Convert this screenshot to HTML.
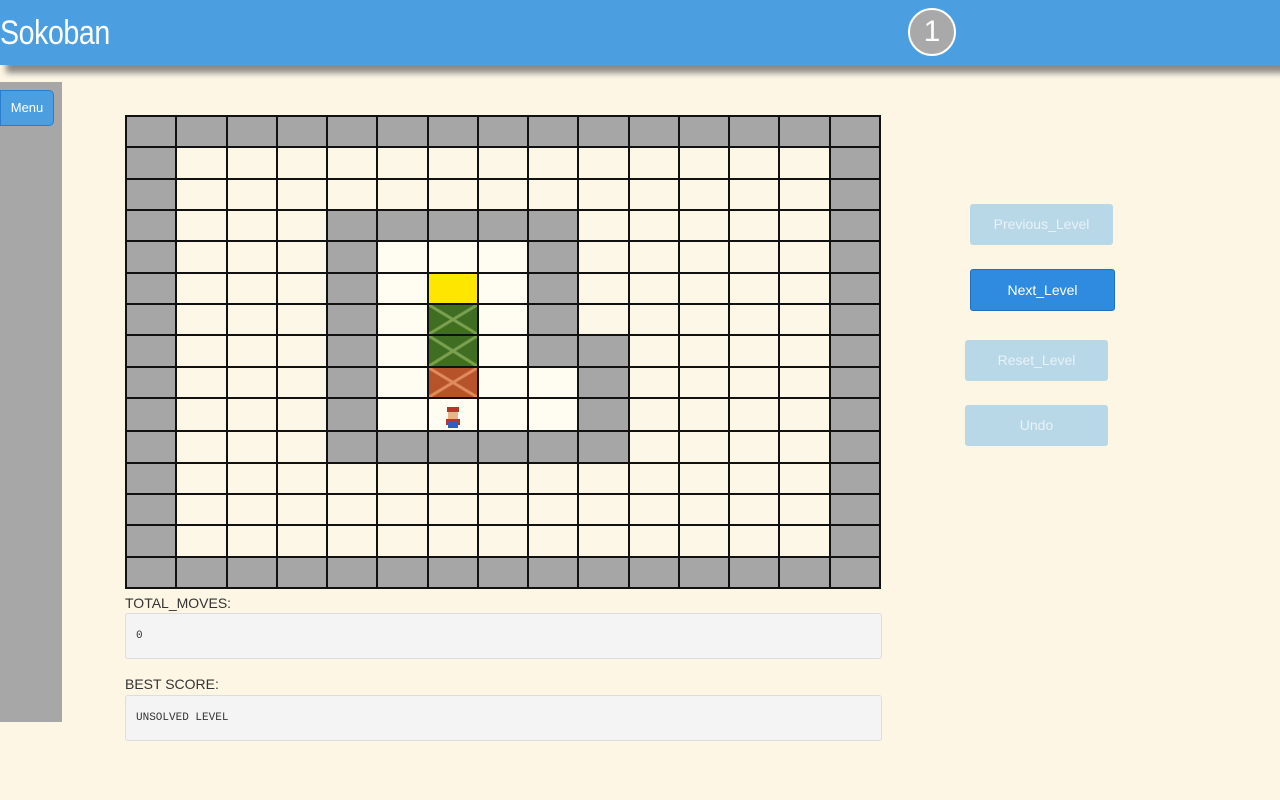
<!DOCTYPE html>
<html><head><style>
body{margin:0;width:1280px;height:800px;background:#fdf6e5;font-family:"Liberation Sans",sans-serif;position:relative;overflow:hidden}
.hdr{position:absolute;left:0;top:0;width:1280px;height:65px;background:#4b9fe1;box-shadow:6px 8px 6px #8a8a8a}
.hdr h1{margin:0;position:absolute;left:0;top:14px;font-weight:normal;color:#fff;font-size:34px;letter-spacing:-0.5px;transform:scaleX(0.84);transform-origin:0 0}
.num{position:absolute;left:908px;top:8px;width:44px;height:44px;border-radius:50%;background:#a9a9a9;border:2px solid #fff;color:#fff;font-size:30px;text-align:center;line-height:44px}
.side{position:absolute;left:0;top:82px;width:62px;height:640px;background:#a7a7a7}
.menu{position:absolute;left:0;top:90px;width:52px;height:34px;background:#4b9fe1;border:1px solid #2a7ccc;border-radius:0 5px 5px 0;color:#fff;font-size:13px;text-align:center;line-height:34px}
table{position:absolute;left:125px;top:115px;border-collapse:collapse;width:756px;height:474px;table-layout:fixed}
td{border:2px solid #111;padding:0;height:29px;background:#fdf7e7;font-size:0;line-height:0;overflow:hidden}
td.w{background:#a6a6a6}td.i{background:#fffdf2}td.y{background:#ffe600}
td.g{background:linear-gradient(to top right,transparent 46%,#7aa050 48%,#7aa050 52%,transparent 54%),linear-gradient(to bottom right,transparent 46%,#7aa050 48%,#7aa050 52%,transparent 54%),#3f6e22}
td.o{background:linear-gradient(to top right,transparent 46%,#e08a60 48%,#e08a60 52%,transparent 54%),linear-gradient(to bottom right,transparent 46%,#e08a60 48%,#e08a60 52%,transparent 54%),#b6532a}
.btn{position:absolute;width:143px;height:41px;border-radius:3px;color:#fff;font-size:14px;text-align:center;line-height:41px}
.l{background:#b9d8e7;color:#e8f2f7}
.lab{position:absolute;left:125px;font-size:14px;color:#333}
.inp{position:absolute;left:125px;width:755px;height:44px;background:#f4f4f4;border:1px solid #ddd;border-radius:3px;font-family:"Liberation Mono",monospace;font-size:11px;line-height:44px;text-indent:10px;color:#333}
</style></head><body>
<div class="hdr"><h1>Sokoban</h1><div class="num">1</div></div>
<div class="side"></div>
<div class="menu">Menu</div>
<table>
<tr><td class="w"></td><td class="w"></td><td class="w"></td><td class="w"></td><td class="w"></td><td class="w"></td><td class="w"></td><td class="w"></td><td class="w"></td><td class="w"></td><td class="w"></td><td class="w"></td><td class="w"></td><td class="w"></td><td class="w"></td></tr>
<tr><td class="w"></td><td></td><td></td><td></td><td></td><td></td><td></td><td></td><td></td><td></td><td></td><td></td><td></td><td></td><td class="w"></td></tr>
<tr><td class="w"></td><td></td><td></td><td></td><td></td><td></td><td></td><td></td><td></td><td></td><td></td><td></td><td></td><td></td><td class="w"></td></tr>
<tr><td class="w"></td><td></td><td></td><td></td><td class="w"></td><td class="w"></td><td class="w"></td><td class="w"></td><td class="w"></td><td></td><td></td><td></td><td></td><td></td><td class="w"></td></tr>
<tr><td class="w"></td><td></td><td></td><td></td><td class="w"></td><td class="i"></td><td class="i"></td><td class="i"></td><td class="w"></td><td></td><td></td><td></td><td></td><td></td><td class="w"></td></tr>
<tr><td class="w"></td><td></td><td></td><td></td><td class="w"></td><td class="i"></td><td class="y"></td><td class="i"></td><td class="w"></td><td></td><td></td><td></td><td></td><td></td><td class="w"></td></tr>
<tr><td class="w"></td><td></td><td></td><td></td><td class="w"></td><td class="i"></td><td class="g"></td><td class="i"></td><td class="w"></td><td></td><td></td><td></td><td></td><td></td><td class="w"></td></tr>
<tr><td class="w"></td><td></td><td></td><td></td><td class="w"></td><td class="i"></td><td class="g"></td><td class="i"></td><td class="w"></td><td class="w"></td><td></td><td></td><td></td><td></td><td class="w"></td></tr>
<tr><td class="w"></td><td></td><td></td><td></td><td class="w"></td><td class="i"></td><td class="o"></td><td class="i"></td><td class="i"></td><td class="w"></td><td></td><td></td><td></td><td></td><td class="w"></td></tr>
<tr><td class="w"></td><td></td><td></td><td></td><td class="w"></td><td class="i"></td><td class="i"><svg width="22" height="24" viewBox="0 0 22 24" style="display:block;margin:7px auto 0"><rect x="5" y="1" width="12" height="5" fill="#b8352a"/><rect x="6" y="6" width="10" height="7" fill="#e9b48a"/><rect x="4" y="13" width="14" height="6" fill="#b8352a"/><rect x="6" y="15" width="10" height="7" fill="#2f5fc4"/></svg></td><td class="i"></td><td class="i"></td><td class="w"></td><td></td><td></td><td></td><td></td><td class="w"></td></tr>
<tr><td class="w"></td><td></td><td></td><td></td><td class="w"></td><td class="w"></td><td class="w"></td><td class="w"></td><td class="w"></td><td class="w"></td><td></td><td></td><td></td><td></td><td class="w"></td></tr>
<tr><td class="w"></td><td></td><td></td><td></td><td></td><td></td><td></td><td></td><td></td><td></td><td></td><td></td><td></td><td></td><td class="w"></td></tr>
<tr><td class="w"></td><td></td><td></td><td></td><td></td><td></td><td></td><td></td><td></td><td></td><td></td><td></td><td></td><td></td><td class="w"></td></tr>
<tr><td class="w"></td><td></td><td></td><td></td><td></td><td></td><td></td><td></td><td></td><td></td><td></td><td></td><td></td><td></td><td class="w"></td></tr>
<tr><td class="w"></td><td class="w"></td><td class="w"></td><td class="w"></td><td class="w"></td><td class="w"></td><td class="w"></td><td class="w"></td><td class="w"></td><td class="w"></td><td class="w"></td><td class="w"></td><td class="w"></td><td class="w"></td><td class="w"></td></tr>
</table>
<div class="btn l" style="left:970px;top:204px">Previous_Level</div>
<div class="btn" style="left:970px;top:269px;background:#2f8be0;border:1px solid #1f6fc0;height:40px;line-height:40px">Next_Level</div>
<div class="btn l" style="left:965px;top:340px">Reset_Level</div>
<div class="btn l" style="left:965px;top:405px">Undo</div>
<div class="lab" style="top:595px">TOTAL_MOVES:</div>
<div class="inp" style="top:613px">0</div>
<div class="lab" style="top:676px">BEST SCORE:</div>
<div class="inp" style="top:695px">UNSOLVED LEVEL</div>
</body></html>
